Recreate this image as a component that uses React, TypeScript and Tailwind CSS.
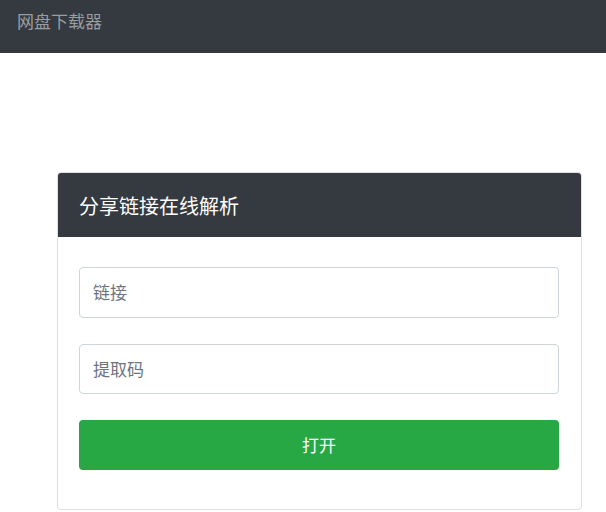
import React, { useState } from 'react';

const font = { fontFamily: '"Liberation Sans", "Noto Sans CJK SC", sans-serif' };

export default function App() {
  const [link, setLink] = useState('');
  const [code, setCode] = useState('');

  return (
    <div className="min-h-[512px] bg-white" style={font}>
      {/* Navbar */}
      <nav className="h-[53px] bg-[#343a40] px-[17px] pt-[9px]">
        <span className="text-[17px] leading-[28px] text-[#9a9da0]">网盘下载器</span>
      </nav>

      {/* Card */}
      <div className="ml-[57px] mt-[119px] w-[525px] h-[338px] rounded-[4px] border border-[#dfdfdf] overflow-hidden">
        <div className="h-[64px] bg-[#343a40] px-[21px] pt-[19px]">
          <h4 className="text-[20px] leading-[30px] text-white">分享链接在线解析</h4>
        </div>
        <form
          className="flex flex-col gap-[26px] px-[21px] pt-[30px]"
          onSubmit={(e) => e.preventDefault()}
        >
          <input
            value={link}
            onChange={(e) => setLink(e.target.value)}
            placeholder="链接"
            className="h-[51px] w-[480px] rounded-[4px] border border-[#ced4da] px-[13px] pt-[3px] text-[17px] text-[#495057] placeholder:text-[#6c757d] outline-none"
          />
          <input
            value={code}
            onChange={(e) => setCode(e.target.value)}
            placeholder="提取码"
            className="h-[50px] w-[480px] rounded-[4px] border border-[#ced4da] px-[13px] pt-[3px] text-[17px] text-[#495057] placeholder:text-[#6c757d] outline-none"
          />
          <button
            type="submit"
            className="h-[50px] w-[480px] rounded-[4px] bg-[#28a745] pt-[3px] text-[17px] text-white"
          >
            打开
          </button>
        </form>
      </div>
    </div>
  );
}
